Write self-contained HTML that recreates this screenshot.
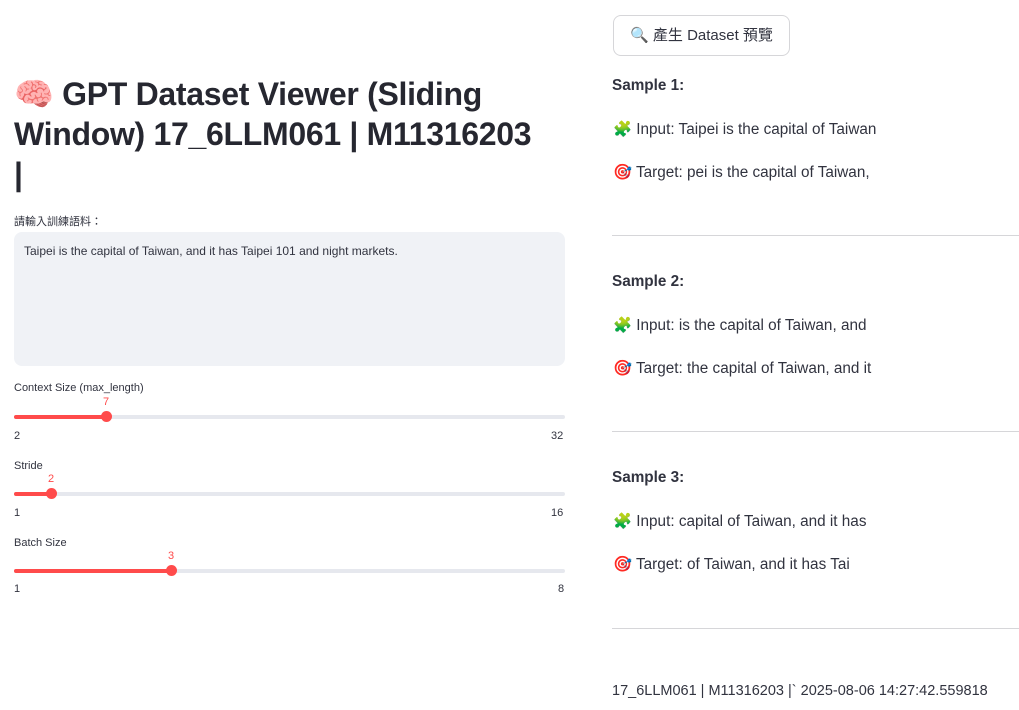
<!DOCTYPE html>
<html><head><meta charset="utf-8"><style>
body{margin:0;width:1019px;height:710px;background:#fff;font-family:"Liberation Sans","Noto Sans CJK TC",sans-serif;color:#31333f;position:relative;overflow:hidden}
.a{position:absolute;white-space:nowrap}
h1{position:absolute;left:14px;top:74px;margin:0;font-size:32px;line-height:40px;font-weight:bold;width:560px;color:#262730;letter-spacing:-0.3px}
.lbl{font-size:11px;color:#31333f}
.ta{position:absolute;left:14px;top:232px;width:551px;height:134px;background:#f0f2f6;border-radius:8px}
.track{position:absolute;left:14px;width:551px;height:4px;background:#e6e8ee;border-radius:2px}
.fill{position:absolute;left:0;top:0;height:4px;background:#ff4b4b;border-radius:2px}
.th{position:absolute;top:-4px;width:11px;height:11px;margin-left:-5px;border-radius:50%;background:#ff4b4b}
.v{position:absolute;font-size:11px;color:#ff4b4b;top:-19px;transform:translateX(-50%)}
.s{font-size:15.3px;color:#31333f}
.hr{position:absolute;left:612px;width:407px;height:1px;background:#d6d6d9}
</style></head><body>
<h1>🧠 GPT Dataset Viewer (Sliding<br>Window) 17_6LLM061 | M11316203<br>|</h1>
<div class="a lbl" style="left:14px;top:213px">請輸入訓練語料：</div>
<div class="ta"><div class="a" style="left:10px;top:12px;font-size:12px">Taipei is the capital of Taiwan, and it has Taipei 101 and night markets.</div></div>
<div class="a lbl" style="left:14px;top:382px">Context Size (max_length)</div>
<div class="track" style="top:415px"><div class="fill" style="width:92px"></div><div class="th" style="left:92px"></div><div class="v" style="left:92px">7</div></div>
<div class="a lbl" style="left:14px;top:430px">2</div><div class="a lbl" style="left:551px;top:430px">32</div>
<div class="a lbl" style="left:14px;top:460px">Stride</div>
<div class="track" style="top:492px"><div class="fill" style="width:37px"></div><div class="th" style="left:37px"></div><div class="v" style="left:37px">2</div></div>
<div class="a lbl" style="left:14px;top:507px">1</div><div class="a lbl" style="left:551px;top:507px">16</div>
<div class="a lbl" style="left:14px;top:537px">Batch Size</div>
<div class="track" style="top:569px"><div class="fill" style="width:157px"></div><div class="th" style="left:157px"></div><div class="v" style="left:157px">3</div></div>
<div class="a lbl" style="left:14px;top:583px">1</div><div class="a lbl" style="left:558px;top:583px">8</div>

<div class="a" style="left:613px;top:15px;width:177px;height:41px;border:1px solid #d6d6d9;border-radius:8px;box-sizing:border-box;font-size:15px;line-height:39px;text-align:center">🔍 產生 Dataset 預覽</div>
<div class="a s" style="left:612px;top:77px;font-weight:bold">Sample 1:</div>
<div class="a s" style="left:613px;top:120px">🧩 Input: Taipei is the capital of Taiwan</div>
<div class="a s" style="left:613px;top:163px">🎯 Target: pei is the capital of Taiwan,</div>
<div class="hr" style="top:235px"></div>
<div class="a s" style="left:612px;top:273px;font-weight:bold">Sample 2:</div>
<div class="a s" style="left:613px;top:316px">🧩 Input: is the capital of Taiwan, and</div>
<div class="a s" style="left:613px;top:359px">🎯 Target: the capital of Taiwan, and it</div>
<div class="hr" style="top:431px"></div>
<div class="a s" style="left:612px;top:469px;font-weight:bold">Sample 3:</div>
<div class="a s" style="left:613px;top:512px">🧩 Input: capital of Taiwan, and it has</div>
<div class="a s" style="left:613px;top:555px">🎯 Target: of Taiwan, and it has Tai</div>
<div class="hr" style="top:628px"></div>
<div class="a" style="left:612px;top:683px;font-size:14.5px">17_6LLM061 | M11316203 |` 2025-08-06 14:27:42.559818</div>
</body></html>
